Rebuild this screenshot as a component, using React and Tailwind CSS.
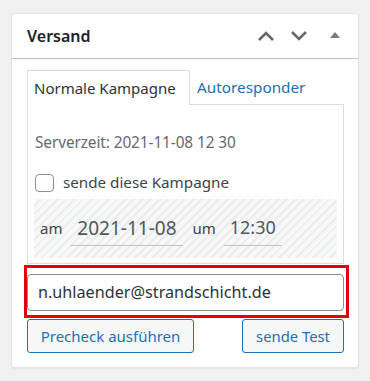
import React from 'react'

const ChevronUp = () => (
  <svg className="h-[12px] w-[18px]" viewBox="0 0 18 12" fill="none" stroke="#646970" strokeWidth="2.6">
    <path d="M2 10l7-7 7 7" />
  </svg>
)

const ChevronDown = () => (
  <svg className="h-[12px] w-[18px]" viewBox="0 0 18 12" fill="none" stroke="#646970" strokeWidth="2.6">
    <path d="M2 2l7 7 7-7" />
  </svg>
)

const Triangle = () => (
  <svg className="h-[6px] w-[10px]" viewBox="0 0 10 6" fill="#787c82">
    <path d="M0 6l5-6 5 6z" />
  </svg>
)

export default function App() {
  return (
    <div className="min-h-[381px] w-[370px] bg-[#f0f0f1] pl-[11px] pt-[13px] font-['Noto_Sans',sans-serif] text-[#3c434a]">
      <div className="w-[348px] rounded-[3px] border border-[#e2e4e7] bg-white shadow-[0_1px_1px_rgba(0,0,0,0.04)]">
        <div className="flex h-[45px] items-center justify-between border-b border-[#c3c4c7] pl-[15px] pr-[16px]">
          <h2 className="text-[16px] font-semibold text-[#1d2327]">Versand</h2>
          <div className="flex items-center">
            <span className="flex w-[24px] justify-center"><ChevronUp /></span>
            <span className="ml-[9px] flex w-[24px] justify-center"><ChevronDown /></span>
            <span className="ml-[17px] flex w-[14px] justify-center pb-[2px]"><Triangle /></span>
          </div>
        </div>

        <div className="px-[15px] pb-[14px] pt-[10px]">
          <div className="flex h-[35px] items-end">
            <div className="relative -mb-px flex h-[35px] w-[163px] items-center border border-b-0 border-[#dcdcde] bg-white pl-[6px] text-[15px] text-[#2c3338]">
              Normale Kampagne
            </div>
            <div className="flex h-[34px] items-center pl-[7px] text-[15.3px] text-[#2271b1]">Autoresponder</div>
          </div>
          <div className="w-[317px] border border-[#dcdcde] px-[6px] pb-[5px] pt-[26px]">
            <p className="pl-[1px] text-[15.4px] tracking-[-0.1px] text-[#646970]">Serverzeit: 2021-11-08 12 30</p>
            <label className="mt-[17px] flex items-center gap-[9px] pl-[1px] text-[15.2px] text-[#3c434a]">
              <span className="h-[18px] w-[19px] rounded-[4px] border border-[#8c8f94] bg-white" />
              sende diese Kampagne
            </label>
            <div className="mt-[5px] flex h-[59px] w-[303px] items-center bg-[image:repeating-linear-gradient(135deg,#f6f7f7_0px,#f6f7f7_4px,#ececec_4px,#ececec_6px)] pl-[6px]">
              <span className="text-[15px] text-[#3c434a]">am</span>
              <span className="ml-[8px] flex h-[36px] w-[113px] items-center justify-center border-b border-[#c3c4c7] text-[19px] text-[#50575e]">2021-11-08</span>
              <span className="ml-[9px] text-[15px] text-[#3c434a]">um</span>
              <span className="ml-[8px] flex h-[36px] w-[58px] items-center justify-center border-b border-[#c3c4c7] text-[18px] text-[#50575e]">12:30</span>
            </div>
          </div>

          <div className="relative mt-[10px]">
            <div className="flex h-[37px] w-[317px] items-center rounded-[4px] border border-[#8c8f94] px-[10px] text-[16.2px] text-[#2c3338]">
              n.uhlaender@strandschicht.de
            </div>
            <div className="pointer-events-none absolute -left-[3px] -right-[6px] -top-[9px] -bottom-[7px] border-[3px] border-[#e3000b]" />
          </div>

          <div className="mt-[8px] flex w-[317px] justify-between">
            <button className="h-[34px] w-[167px] rounded-[3px] border border-[#2271b1] bg-[#f6f7f7] text-[15px] text-[#2271b1]">Precheck ausführen</button>
            <button className="h-[34px] w-[102px] rounded-[3px] border border-[#2271b1] bg-[#f6f7f7] text-[14.8px] text-[#2271b1]">sende Test</button>
          </div>
        </div>
      </div>
    </div>
  )
}
